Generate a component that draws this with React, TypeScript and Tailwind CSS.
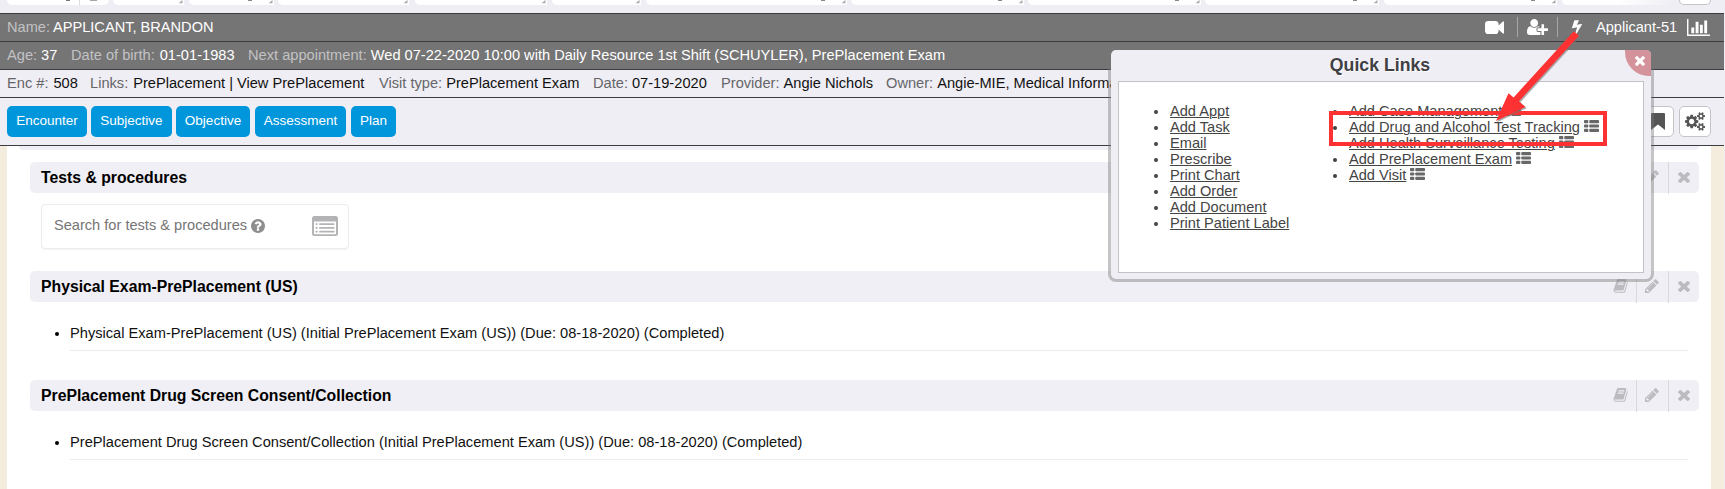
import React from "react";

const TIMES =
  "M1490 1322q0 40-28 68l-136 136q-28 28-68 28t-68-28l-294-294-294 294q-28 28-68 28t-68-28l-136-136q-28-28-28-68t28-68l294-294-294-294q-28-28-28-68t28-68l136-136q28-28 68-28t68 28l294 294 294-294q28-28 68-28t68 28l136 136q28 28 28 68t-28 68l-294 294 294 294q28 28 28 68z";
const PENCIL =
  "M491 1536l91-91-235-235-91 91v107h128v128h107zm523-928q0-22-22-22-10 0-17 7l-542 542q-7 7-7 17 0 22 22 22 10 0 17-7l542-542q7-7 7-17zm-54-192l416 416-832 832h-416v-416zm683 96q0 53-37 90l-166 166-416-416 166-165q36-38 90-38 53 0 91 38l235 234q37 39 37 91z";
const BOOK =
  "M1703 478q40 57 18 129l-275 906q-19 64-76.5 107.5t-122.5 43.5h-923q-77 0-148.5-53.5t-99.5-131.5q-24-67-2-127 0-4 3-27t4-37q1-8-3-21.5t-3-19.5q2-11 8-21t16.5-23.5 16.5-23.5q23-38 45-91.5t30-91.5q3-10 .5-30t-.5-28q3-11 17-28t17-23q21-36 42-92t25-90q1-9-2.5-32t.5-28q4-13 22-30.5t22-22.5q19-26 42.5-84.5t27.5-96.5q1-8-3-25.5t-2-26.5q2-8 9-18t18-23 17-21q8-12 16.5-30.5t15-35 16-36 19.5-32 26.5-23.5 36-11.5 47.5 5.5l-1 3q38-9 51-9h761q74 0 114 56t18 130l-274 906q-36 119-71.5 153.5t-128.5 34.5h-869q-27 0-38 15-11 16-1 43 24 70 144 70h923q29 0 56-15.5t35-41.5l300-987q7-22 5-57 38 15 59 43zm-1064 2q-4 13 2 22.5t20 9.5h608q13 0 25.5-9.5t16.5-22.5l21-64q4-13-2-22.5t-20-9.5h-608q-13 0-25.5 9.5t-16.5 22.5zm-83 256q-4 13 2 22.5t20 9.5h608q13 0 25.5-9.5t16.5-22.5l21-64q4-13-2-22.5t-20-9.5h-608q-13 0-25.5 9.5t-16.5 22.5z";
const VIDEO =
  "M1792 352v1088q0 42-39 59-13 5-25 5-27 0-45-19l-403-403v166q0 119-84.5 203.5t-203.5 84.5h-704q-119 0-203.5-84.5t-84.5-203.5v-704q0-119 84.5-203.5t203.5-84.5h704q119 0 203.5 84.5t84.5 203.5v165l403-402q18-19 45-19 12 0 25 5 39 17 39 59z";
const USER_PLUS =
  "M704 896q-159 0-271.5-112.5t-112.5-271.5 112.5-271.5 271.5-112.5 271.5 112.5 112.5 271.5-112.5 271.5-271.5 112.5zm960 128h352q13 0 22.5 9.5t9.5 22.5v192q0 13-9.5 22.5t-22.5 9.5h-352v352q0 13-9.5 22.5t-22.5 9.5h-192q-13 0-22.5-9.5t-9.5-22.5v-352h-352q-13 0-22.5-9.5t-9.5-22.5v-192q0-13 9.5-22.5t22.5-9.5h352v-352q0-13 9.5-22.5t22.5-9.5h192q13 0 22.5 9.5t9.5 22.5v352zm-736 224q0 52 38 90t90 38h256v238q-68 50-171 50h-874q-121 0-194-69t-73-190q0-53 3.5-103.5t14-109 26.5-108.5 43-97.5 62-81 85.5-53.5 111.5-20q19 0 39 17 79 61 154.5 91.5t164.5 30.5 164.5-30.5 154.5-91.5q20-17 39-17 132 0 217 96h-223q-52 0-90 38t-38 90v192z";
const BOLT =
  "M1333 566q18 20 7 44l-540 1157q-13 25-42 25-4 0-14-2-17-5-25.5-19t-4.5-30l197-808-406 101q-4 1-12 1-18 0-31-11-18-15-13-39l201-825q4-14 16-23t28-9h328q19 0 32 12.5t13 29.5q0 8-5 18l-171 463 396-98q8-2 12-2 19 0 34 15z";
const BARS =
  "M640 896v512h-256v-512h256zm384-512v1024h-256v-1024h256zm1024 1152v128h-2048v-1536h128v1408h1920zm-640-896v768h-256v-768h256zm384-384v1152h-256v-1152h256z";
const QUESTION =
  "M1024 1376v-192q0-14-9-23t-23-9h-192q-14 0-23 9t-9 23v192q0 14 9 23t23 9h192q14 0 23-9t9-23zm256-672q0-88-55.5-163t-138.5-116-170-41q-243 0-371 213-15 24 8 42l132 100q7 6 19 6 16 0 25-12 53-68 86-92 34-24 86-24 48 0 85.5 26t37.5 59q0 38-20 61t-68 45q-63 28-115.5 86.5t-52.5 125.5v36q0 14 9 23t23 9h192q14 0 23-9t9-23q0-19 21.5-49.5t54.5-49.5q32-18 49-28.5t46-35 44.5-48 28-60.5 12.5-81zm384 192q0 209-103 385.5t-279.5 279.5-385.5 103-385.5-103-279.5-279.5-103-385.5 103-385.5 279.5-279.5 385.5-103 385.5 103 279.5 279.5 103 385.5z";
const COGS =
  "M896 896q0-106-75-181t-181-75-181 75-75 181 75 181 181 75 181-75 75-181zm768 512q0-52-38-90t-90-38-90 38-38 90q0 53 37.5 90.5t90.5 37.5 90.5-37.5 37.5-90.5zm0-1024q0-52-38-90t-90-38-90 38-38 90q0 53 37.5 90.5t90.5 37.5 90.5-37.5 37.5-90.5zm-384 421v185q0 10-7 19.5t-16 10.5l-155 24q-11 35-32 76 34 48 90 115 7 11 7 20 0 12-7 19-23 30-82.5 89.5t-78.5 59.5q-11 0-21-7l-115-90q-37 19-77 31-11 108-23 155-7 24-30 24h-186q-11 0-20-7.5t-10-17.5l-23-153q-34-10-75-31l-118 89q-7 7-20 7-11 0-21-8-144-133-144-160 0-9 7-19 10-14 41-53t47-61q-23-44-35-82l-152-24q-10-1-17-9.5t-7-19.5v-185q0-10 7-19.5t16-10.5l155-24q11-35 32-76-34-48-90-115-7-11-7-20 0-12 7-20 22-30 82-89t79-59q11 0 21 7l115 90q34-18 77-32 11-108 23-154 7-24 30-24h186q11 0 20 7.5t10 17.5l23 153q34 10 75 31l118-89q8-7 20-7 11 0 21 8 144 133 144 160 0 8-7 19-12 16-42 54t-45 60q23 48 34 82l152 23q10 2 17 10.5t7 19.5zm640 533v140q0 16-149 31-12 27-30 52 51 113 51 138 0 4-4 7-122 71-124 71-8 0-46-47t-52-68q-20 2-30 2t-30-2q-14 21-52 68t-46 47q-2 0-124-71-4-3-4-7 0-25 51-138-18-25-30-52-149-15-149-31v-140q0-16 149-31 13-29 30-52-51-113-51-138 0-4 4-7 4-2 35-20t59-34 30-16q8 0 46 46.5t52 67.5q20-2 30-2t30 2q51-71 92-112l6-2q4 0 124 70 4 3 4 7 0 25-51 138 17 23 30 52 149 15 149 31zm0-1024v140q0 16-149 31-12 27-30 52 51 113 51 138 0 4-4 7-122 71-124 71-8 0-46-47t-52-68q-20 2-30 2t-30-2q-14 21-52 68t-46 47q-2 0-124-71-4-3-4-7 0-25 51-138-18-25-30-52-149-15-149-31v-140q0-16 149-31 13-29 30-52-51-113-51-138 0-4 4-7 4-2 35-20t59-34 30-16q8 0 46 46.5t52 67.5q20-2 30-2t30 2q51-71 92-112l6-2q4 0 124 70 4 3 4 7 0 25-51 138 17 23 30 52 149 15 149 31z";

function Icon({ d, box, className }: { d: string; box: string; className: string }) {
  return (
    <svg viewBox={box} preserveAspectRatio="none" fill="currentColor" className={"shrink-0 " + className}>
      <path d={d} />
    </svg>
  );
}

function ListIcon() {
  return (
    <svg viewBox="0 0 15 12" fill="currentColor" className="mb-[2px] ml-1 h-3 w-[15px] text-[#686868]">
      {[0, 4.4, 8.8].map((y) => (
        <g key={y}>
          <rect x="0" y={y} width="4.3" height="3.2" rx="0.8" />
          <rect x="5.3" y={y} width="9.7" height="3.2" rx="0.8" />
        </g>
      ))}
    </svg>
  );
}

function ListAlt() {
  return (
    <svg viewBox="0 0 26 20" className="h-5 w-[26px] text-[#b3b3b6]" fill="currentColor">
      <path
        fillRule="evenodd"
        d="M2.5 0h21A2.5 2.5 0 0 1 26 2.5v15a2.5 2.5 0 0 1-2.5 2.5h-21A2.5 2.5 0 0 1 0 17.5v-15A2.5 2.5 0 0 1 2.5 0zM2 5.6v11.8q0 .8.8.8h20.4q.8 0 .8-.8V5.6z"
      />
      {[7.2, 11, 14.8].map((y) => (
        <g key={y}>
          <rect x="3.6" y={y} width="2" height="1.8" rx="0.4" />
          <rect x="7.2" y={y} width="15.2" height="1.8" rx="0.4" />
        </g>
      ))}
    </svg>
  );
}

/* The tab strip is scrolled so only the lower edge of each tab shows. */
const tabs = [
  "ml-[7px] w-[102px] rounded-b-[5px]",
  "ml-[4px] w-[71px]",
  "ml-[5px] w-[85px]",
  "ml-[4px] w-[131px]",
  "ml-[6px] w-[132px]",
  "ml-[5px] w-[89px]",
  "ml-[5px] w-[201px]",
  "ml-[4px] w-[173px]",
  "ml-[4px] w-[173px]",
  "ml-[4px] w-[174px]",
  "ml-[5px] w-[173px]",
];

function TabStrip() {
  return (
    <div className="flex h-[13px] items-start bg-[#efeef4]">
      {tabs.map((c, i) => (
        <div key={i} className={"flex h-[5px] shrink-0 justify-end rounded-bl-[5px] bg-white " + c}>
          {i === 0 ? (
            <>
              <div className="mr-[9px] h-px w-[4px] bg-[#777]" />
              <div className="flex h-[5px] w-[30px] border-l border-[#dcdce0] pl-[10px]">
                <div className="h-px w-[7px] bg-[#a5a5a5]" />
              </div>
            </>
          ) : (
            <>
              {i > 1 && i !== 3 && i !== 4 && i !== 5 && <div className="mr-[16px] h-px w-[4px] bg-[#888]" />}
              <svg viewBox="0 0 5 5" className="mr-[1px] h-[4px] w-[5px]">
                <path d="M5 0V4H0z" fill="#a9a9ad" />
              </svg>
            </>
          )}
        </div>
      ))}
      <div className="ml-[5px] h-[5px] w-[112px] shrink-0 rounded-bl-[5px] bg-gradient-to-r from-white via-white to-[#efeef4]" />
      <div className="ml-[5px] h-[5px] w-8 shrink-0 rounded-b-[5px] border border-t-0 border-[#c4c4c8] bg-white" />
    </div>
  );
}

function Field({ label, value, w, dark }: { label: string; value: string; w: string; dark?: boolean }) {
  return (
    <div className={"flex shrink-0 whitespace-nowrap " + w}>
      <span className={dark ? "text-[#c2c2c4]" : "text-[#66666a]"}>{label}</span>
      <span className={dark ? "text-white" : "text-[#111]"}>{value}</span>
    </div>
  );
}

function Section({ title, className }: { title: string; className: string }) {
  return (
    <div className={"ml-[23px] flex h-[31px] w-[1669px] items-center rounded-[5px] bg-[#f0eff5] " + className}>
      <h2 className="flex-1 pl-[11px] text-[15.77px] font-bold text-black">{title}</h2>
      <div className="flex h-8 self-start text-[#bcbcc0]">
        <div className="flex w-8 items-start border-r border-[#d9d9dd] pl-[8px] pt-2">
          <Icon d={BOOK} box="0 128 1760 1560" className="h-[14px] w-[15px]" />
        </div>
        <div className="flex w-8 items-start border-r border-[#d9d9dd] pl-[8px] pt-[8px]">
          <Icon d={PENCIL} box="128 128 1536 1536" className="h-[14px] w-[14px]" />
        </div>
        <div className="flex w-[30px] items-start pl-[9px] pt-[10px]">
          <Icon d={TIMES} box="302 366 1188 1188" className="h-[11px] w-[12px]" />
        </div>
      </div>
    </div>
  );
}

function Entry({ text }: { text: string }) {
  return (
    <div className="ml-[63px] mt-[22px] h-[27px] w-[1618px] border-b border-[#ececee] text-[14.64px] leading-[18px] text-[#111]">
      <div className="-ml-[15px] flex items-center">
        <span className="mt-[2px] h-[4px] w-[4px] rounded-full bg-black" />
        <span className="ml-[11px]">{text}</span>
      </div>
    </div>
  );
}

function LinkItem({ text, icon }: { text: string; icon?: boolean }) {
  return (
    <li className="flex h-4 items-center whitespace-nowrap">
      <span className="mr-3 mt-px h-[4px] w-[4px] rounded-full bg-[#444]" />
      <a className="underline decoration-1 underline-offset-1">{text}</a>
      {icon && <ListIcon />}
    </li>
  );
}

function QuickLinks() {
  return (
    <div className="absolute left-[1111px] top-[50px] flex h-[229px] w-[540px] flex-col rounded-[5px] bg-[#efeef4] px-[7px] shadow-[0_0_0_3px_rgba(117,117,117,0.42)]">
      <div className="flex h-[31px] items-center justify-center pr-[2px] text-[17.7px] font-bold text-[#404044] [text-shadow:1px_1px_0_#fff]">
        Quick Links
      </div>
      <div className="flex h-[192px] border border-[#c3c3c5] bg-white pl-[35px] pt-[21px] text-[14.6px] leading-4 text-[#444]">
        <ul className="w-[179px]">
          {["Add Appt", "Add Task", "Email", "Prescribe", "Print Chart", "Add Order", "Add Document", "Print Patient Label"].map((t) => (
            <LinkItem key={t} text={t} />
          ))}
        </ul>
        <ul>
          {["Add Case Management", "Add Drug and Alcohol Test Tracking", "Add Health Surveillance Testing", "Add PrePlacement Exam", "Add Visit"].map((t) => (
            <LinkItem key={t} text={t} icon />
          ))}
        </ul>
      </div>
      <div className="absolute right-0 top-0 flex h-[26px] w-[26px] rounded-bl-[24px] rounded-tr-[5px] bg-[#d4929b] pl-[10px] pt-[6px] text-white">
        <Icon d={TIMES} box="302 366 1188 1188" className="h-[10px] w-[10px]" />
      </div>
    </div>
  );
}

export default function App() {
  return (
    <div className="relative h-[489px] w-[1725px] overflow-hidden bg-[#efeef4] font-['Liberation_Sans',Arial,sans-serif]">
      <div className="w-[1724px]">
        <TabStrip />
        <div className="flex h-[28px] items-center border-t border-[#3c3c40] bg-[#757575] pl-[7px] text-[14.6px]">
          <Field label="Name:" value="APPLICANT, BRANDON" w="w-[400px] gap-[3px]" dark />
          <div className="ml-auto flex items-center text-white">
            <Icon d={VIDEO} box="0 256 1792 1280" className="h-[13px] w-[19px]" />
            <div className="ml-[13px] h-5 w-px bg-[#a6a6a8]" />
            <Icon d={USER_PLUS} box="0 128 2048 1536" className="ml-[9px] h-4 w-[21px]" />
            <div className="ml-[9px] h-5 w-px bg-[#a6a6a8]" />
            <Icon d={BOLT} box="448 0 896 1792" className="ml-[14px] h-4 w-[10px]" />
            <span className="ml-[14px] w-[91px] whitespace-nowrap">Applicant-51</span>
            <Icon d={BARS} box="0 128 2048 1536" className="mr-[14px] h-[17px] w-[23px]" />
          </div>
        </div>
        <div className="flex h-[28px] items-center border-t border-[#3c3c40] bg-[#757575] pl-[7px] text-[14.64px]">
          <Field label="Age:" value="37" w="w-[64px] gap-1" dark />
          <Field label="Date of birth:" value="01-01-1983" w="w-[177px] gap-[5px]" dark />
          <Field label="Next appointment:" value="Wed 07-22-2020 10:00 with Daily Resource 1st Shift (SCHUYLER), PrePlacement Exam" w="w-[800px] gap-1" dark />
        </div>
        <div className="flex h-[28px] items-center overflow-hidden border-t border-[#3c3c40] pl-[7px] text-[14.64px]">
          <Field label="Enc #:" value="508" w="w-[83px] gap-[5px]" />
          <Field label="Links:" value="PrePlacement | View PrePlacement" w="w-[289px] gap-[5px]" />
          <Field label="Visit type:" value="PrePlacement Exam" w="w-[214px] gap-1" />
          <Field label="Date:" value="07-19-2020" w="w-[128px] gap-1" />
          <Field label="Provider:" value="Angie Nichols" w="w-[165px] gap-1" />
          <Field label="Owner:" value="Angie-MIE, Medical Informatics" w="w-[260px] gap-1" />
        </div>
        <div className="flex h-[49px] items-start border-y border-[#3c3c40] pl-[7px] pt-[8px] text-[13.5px] text-white">
          {[
            ["Encounter", "w-[80px]"],
            ["Subjective", "ml-[4px] w-[81px]"],
            ["Objective", "ml-[4px] w-[74px]"],
            ["Assessment", "ml-[5px] w-[91px]"],
            ["Plan", "ml-[5px] w-[45px]"],
          ].map(([t, c]) => (
            <button key={t} className={"flex h-[31px] items-center justify-center rounded-[5px] bg-[#0096dc] " + c}>
              {t}
            </button>
          ))}
          <div className="ml-auto mr-[13px] flex gap-[5px] text-[#555]">
            <div className="flex h-[31px] w-[32px] justify-end rounded-[5px] border border-[#c4c4c8] bg-white pr-[8px] pt-[6px]">
              <svg viewBox="0 0 14 17" className="h-[17px] w-[14px]" fill="currentColor">
                <path d="M1 0H13Q14 0 14 1V17L7 11.5L0 17V1Q0 0 1 0z" />
              </svg>
            </div>
            <div className="flex h-[31px] w-[32px] rounded-[5px] border border-[#c4c4c8] bg-white pl-[5px] pt-[5px]">
              <Icon d={COGS} box="0 0 1920 1792" className="h-[19px] w-[20px]" />
            </div>
          </div>
        </div>
        <div className="h-[343px] border-l-[7px] border-r-[13px] border-[#f4ecdd] bg-white">
          <div className="ml-[12px] h-[4px] w-[1680px] rounded-b-[5px] bg-[#f0eff5]" />
          <Section title="Tests & procedures" className="mt-[12px]" />
          <div className="ml-[34px] mt-[11px] flex h-[45px] w-[308px] items-center rounded-[4px] border border-[#ececf0] pb-[2px] pl-[12px] pr-[10px] text-[14.6px] text-[#757575] shadow-[0_1px_1px_rgba(0,0,0,0.05)]">
            <span className="whitespace-nowrap">Search for tests &amp; procedures</span>
            <Icon d={QUESTION} box="128 128 1536 1536" className="ml-1 h-[14px] w-[14px] text-[#8e8e8e]" />
            <span className="ml-auto"><ListAlt /></span>
          </div>
          <Section title="Physical Exam-PrePlacement (US)" className="mt-[22px]" />
          <Entry text="Physical Exam-PrePlacement (US) (Initial PrePlacement Exam (US)) (Due: 08-18-2020) (Completed)" />
          <Section title="PrePlacement Drug Screen Consent/Collection" className="mt-[29px]" />
          <Entry text="PrePlacement Drug Screen Consent/Collection (Initial PrePlacement Exam (US)) (Due: 08-18-2020) (Completed)" />
        </div>
      </div>
      <QuickLinks />
      <div className="absolute left-[1329px] top-[111px] h-[35px] w-[278px] border-4 border-[#fe3233]" />
      <svg className="absolute left-[1490px] top-[28px] h-[96px] w-[92px]" viewBox="1490 28 92 96">
        <g fill="#777" opacity="0.6" transform="translate(1.2 1.2)">
          <path d="M1573.8 31.2L1579 35.8L1519 101.3L1525.5 107L1496 121L1508.5 93.2L1513.6 97.5z" />
        </g>
        <path d="M1573.8 31.2L1579 35.8L1519 101.3L1525.5 107L1496 121L1508.5 93.2L1513.6 97.5z" fill="#fe3233" />
      </svg>
    </div>
  );
}
